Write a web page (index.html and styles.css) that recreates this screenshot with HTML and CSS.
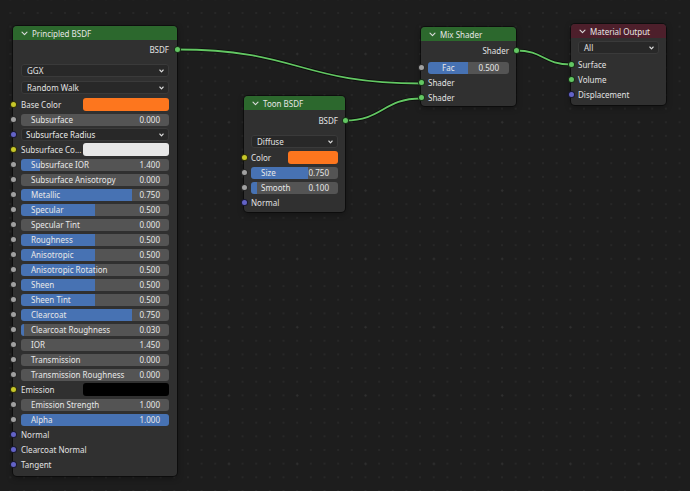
FILE: index.html
```html
<!DOCTYPE html>
<html>
<head>
<meta charset="utf-8">
<link rel="stylesheet" href="styles.css">
</head>
<body>
<div class="canvas">
  <svg class="links" width="690" height="491" viewBox="0 0 690 491">
    <g class="shadow">
      <path d="M177 49.5 C299 49.5 299 83.5 421 83.5"/>
      <path d="M345 120.5 C383 120.5 383 98.5 421 98.5"/>
      <path d="M516 50.5 C543.5 50.5 543.5 64.5 571 64.5"/>
    </g>
    <g class="wire">
      <path d="M177 49.5 C299 49.5 299 83.5 421 83.5"/>
      <path d="M345 120.5 C383 120.5 383 98.5 421 98.5"/>
      <path d="M516 50.5 C543.5 50.5 543.5 64.5 571 64.5"/>
    </g>
  </svg>

  <div class="node principled">
    <div class="header"><svg class="chev" viewBox="0 0 7 5"><path d="M1 1.2 L3.5 3.7 L6 1.2"/></svg><span>Principled BSDF</span></div>
    <div class="body">
      <div class="row out"><span>BSDF</span><i class="sock green"></i></div>
      <div class="menus">
        <div class="menu"><span>GGX</span><svg class="mchev" viewBox="0 0 5 4"><path d="M0.8 1 L2.5 2.8 L4.2 1"/></svg></div>
        <div class="menu"><span>Random Walk</span><svg class="mchev" viewBox="0 0 5 4"><path d="M0.8 1 L2.5 2.8 L4.2 1"/></svg></div>
      </div>
      <div class="row"><i class="sock yellow"></i><span>Base Color</span><span class="swatch orange"></span></div>
      <div class="row"><i class="sock gray"></i><div class="field"><span>Subsurface</span><span>0.000</span></div></div>
      <div class="row"><i class="sock blue"></i><div class="field menu-field"><span>Subsurface Radius</span><svg class="mchev" viewBox="0 0 5 4"><path d="M0.8 1 L2.5 2.8 L4.2 1"/></svg></div></div>
      <div class="row"><i class="sock yellow"></i><span>Subsurface Co...</span><span class="swatch white"></span></div>
      <div class="row"><i class="sock gray"></i><div class="field" style="--v:13%"><span>Subsurface IOR</span><span>1.400</span></div></div>
      <div class="row"><i class="sock gray"></i><div class="field"><span>Subsurface Anisotropy</span><span>0.000</span></div></div>
      <div class="row"><i class="sock gray"></i><div class="field" style="--v:75%"><span>Metallic</span><span>0.750</span></div></div>
      <div class="row"><i class="sock gray"></i><div class="field" style="--v:50%"><span>Specular</span><span>0.500</span></div></div>
      <div class="row"><i class="sock gray"></i><div class="field"><span>Specular Tint</span><span>0.000</span></div></div>
      <div class="row"><i class="sock gray"></i><div class="field" style="--v:50%"><span>Roughness</span><span>0.500</span></div></div>
      <div class="row"><i class="sock gray"></i><div class="field" style="--v:50%"><span>Anisotropic</span><span>0.500</span></div></div>
      <div class="row"><i class="sock gray"></i><div class="field" style="--v:50%"><span>Anisotropic Rotation</span><span>0.500</span></div></div>
      <div class="row"><i class="sock gray"></i><div class="field" style="--v:50%"><span>Sheen</span><span>0.500</span></div></div>
      <div class="row"><i class="sock gray"></i><div class="field" style="--v:50%"><span>Sheen Tint</span><span>0.500</span></div></div>
      <div class="row"><i class="sock gray"></i><div class="field" style="--v:75%"><span>Clearcoat</span><span>0.750</span></div></div>
      <div class="row"><i class="sock gray"></i><div class="field" style="--v:2%"><span>Clearcoat Roughness</span><span>0.030</span></div></div>
      <div class="row"><i class="sock gray"></i><div class="field"><span>IOR</span><span>1.450</span></div></div>
      <div class="row"><i class="sock gray"></i><div class="field"><span>Transmission</span><span>0.000</span></div></div>
      <div class="row"><i class="sock gray"></i><div class="field"><span>Transmission Roughness</span><span>0.000</span></div></div>
      <div class="row"><i class="sock yellow"></i><span>Emission</span><span class="swatch black"></span></div>
      <div class="row"><i class="sock gray"></i><div class="field"><span>Emission Strength</span><span>1.000</span></div></div>
      <div class="row"><i class="sock gray"></i><div class="field" style="--v:100%"><span>Alpha</span><span>1.000</span></div></div>
      <div class="row"><i class="sock blue"></i><span>Normal</span></div>
      <div class="row"><i class="sock blue"></i><span>Clearcoat Normal</span></div>
      <div class="row"><i class="sock blue"></i><span>Tangent</span></div>
    </div>
  </div>

  <div class="node toon">
    <div class="header"><svg class="chev" viewBox="0 0 7 5"><path d="M1 1.2 L3.5 3.7 L6 1.2"/></svg><span>Toon BSDF</span></div>
    <div class="body">
      <div class="row out"><span>BSDF</span><i class="sock green"></i></div>
      <div class="menus">
        <div class="menu"><span>Diffuse</span><svg class="mchev" viewBox="0 0 5 4"><path d="M0.8 1 L2.5 2.8 L4.2 1"/></svg></div>
      </div>
      <div class="row"><i class="sock yellow"></i><span>Color</span><span class="swatch orange"></span></div>
      <div class="row"><i class="sock gray"></i><div class="field" style="--v:66%"><span>Size</span><span>0.750</span></div></div>
      <div class="row"><i class="sock gray"></i><div class="field" style="--v:7%"><span>Smooth</span><span>0.100</span></div></div>
      <div class="row"><i class="sock blue"></i><span>Normal</span></div>
    </div>
  </div>

  <div class="node mix">
    <div class="header"><svg class="chev" viewBox="0 0 7 5"><path d="M1 1.2 L3.5 3.7 L6 1.2"/></svg><span>Mix Shader</span></div>
    <div class="body">
      <div class="row out"><span>Shader</span><i class="sock green"></i></div>
      <div class="row fac"><i class="sock gray"></i><div class="field centered" style="--v:49%"><span class="half">Fac</span><span class="half">0.500</span></div></div>
      <div class="row"><i class="sock green"></i><span>Shader</span></div>
      <div class="row"><i class="sock green"></i><span>Shader</span></div>
    </div>
  </div>

  <div class="node output">
    <div class="header"><svg class="chev" viewBox="0 0 7 5"><path d="M1 1.2 L3.5 3.7 L6 1.2"/></svg><span>Material Output</span></div>
    <div class="body">
      <div class="menus">
        <div class="menu"><span>All</span><svg class="mchev" viewBox="0 0 5 4"><path d="M0.8 1 L2.5 2.8 L4.2 1"/></svg></div>
      </div>
      <div class="row"><i class="sock green"></i><span>Surface</span></div>
      <div class="row"><i class="sock green"></i><span>Volume</span></div>
      <div class="row"><i class="sock blue"></i><span>Displacement</span></div>
    </div>
  </div>
</div>
</body>
</html>
```

FILE: styles.css
```css
* { box-sizing: border-box; }
html, body { margin: 0; padding: 0; }
body {
  width: 690px;
  height: 491px;
  overflow: hidden;
  background: #1d1d1d;
  font-family: "Noto Sans", "DejaVu Sans", sans-serif;
  font-size: 8px;
  color: #e2e2e2;
}
.canvas {
  position: relative;
  width: 690px;
  height: 491px;
  background-color: #1d1d1d;
  background-image:
    radial-gradient(circle, #303030 0, #303030 0.8px, rgba(29,29,29,0) 1.3px),
    radial-gradient(circle, #272727 0, #272727 0.8px, rgba(29,29,29,0) 1.3px);
  background-size: 68.333px 68.333px, 13.667px 13.667px;
  background-position: -10.17px 19.83px, 3.57px 6.17px;
}
.links { position: absolute; left: 0; top: 0; }
.links path { fill: none; }
.links .shadow path { stroke: rgba(0,0,0,0.6); stroke-width: 3.6; }
.links .wire path { stroke: #63c763; stroke-width: 1.8; }

.node {
  position: absolute;
  background: #303030;
  border-radius: 4px;
  box-shadow: 0 0 0 1px rgba(0,0,0,0.45), 0 2px 6px rgba(0,0,0,0.35);
}
.principled { left: 13px; top: 26px; width: 164px; }
.toon { left: 244px; top: 96px; width: 101px; }
.mix { left: 421px; top: 27px; width: 95px; }
.output { left: 571px; top: 24px; width: 95px; }

.header {
  height: 14px;
  display: flex;
  align-items: center;
  gap: 4px;
  padding-left: 8px;
  background: #2c682d;
  border-radius: 4px 4px 0 0;
  color: #e6e6e6;
}
.output .header { background: #4d1f2b; height: 14px; }
.chev { width: 7px; height: 5px; flex: none; }
.chev path, .mchev path { fill: none; stroke: #dcdcdc; stroke-width: 1.1; stroke-linecap: round; stroke-linejoin: round; }
.mchev { width: 5px; height: 4px; flex: none; }

.body { padding: 2px 0 4px; }
.toon .body { padding: 3px 0 2px; }
.mix .body { padding: 2px 0 1px; }
.output .body { padding: 3px 0 3px; }

.row {
  position: relative;
  height: 15px;
  display: flex;
  align-items: center;
  padding: 0 8px;
  white-space: nowrap;
}
.toon .row, .mix .row, .output .row { padding: 0 7px; }
.row.out { justify-content: flex-end; }
.mix .row.fac { margin-top: 2px; }

.sock {
  position: absolute;
  left: -3.5px;
  top: 4px;
  width: 7px;
  height: 7px;
  border-radius: 50%;
  border: 1px solid rgba(0,0,0,0.75);
}
.row.out .sock { left: auto; right: -3.5px; }
.yellow { background: #c7c729; }
.gray { background: #a1a1a1; }
.blue { background: #6363c7; }
.green { background: #63c763; }

.menus {
  display: flex;
  flex-direction: column;
  gap: 4px;
  padding: 7px 8px 3px;
}
.toon .menus { padding: 7px 7px 2px; }
.output .menus { padding: 0 7px 3px; }
.menu {
  height: 13px;
  display: flex;
  align-items: center;
  justify-content: space-between;
  padding: 0 4px 0 5px;
  background: #282828;
  border: 1px solid #3a3a3a;
  border-radius: 3px;
}

.field {
  flex: 1;
  height: 12px;
  border-radius: 3px;
  display: flex;
  align-items: center;
  justify-content: space-between;
  padding: 0 9px 0 10px;
  background-color: #545454;
  background-image: linear-gradient(90deg, #4772b3 var(--v, 0%), rgba(0,0,0,0) var(--v, 0%));
  color: #e8e8e8;
}
.field.menu-field {
  background: #282828;
  border: 1px solid #3a3a3a;
  padding: 0 4px 0 4px;
  height: 13px;
}
.field.centered { padding: 0; }
.field.centered .half { flex: 1; text-align: center; }

.swatch {
  margin-left: auto;
  width: 86px;
  height: 13px;
  border-radius: 3px;
}
.toon .swatch { width: 50px; }
.orange { background: #fd761e; }
.white { background: #e8e8e8; }
.black { background: #000; }
```
